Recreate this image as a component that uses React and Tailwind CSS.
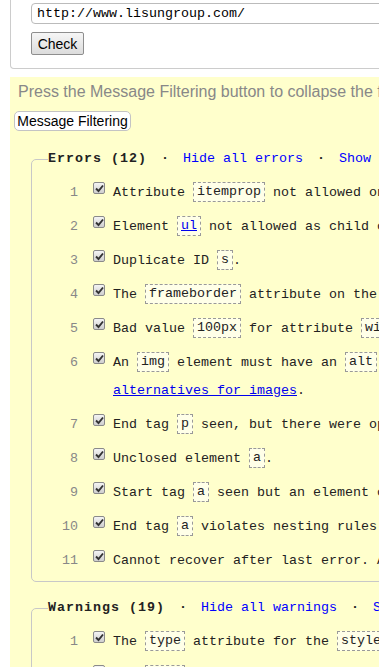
import React from "react";

const mono = { fontFamily: '"Liberation Mono", "DejaVu Sans Mono", monospace' };

function Code({ children, link }) {
  return (
    <code className="inline-block border border-dashed border-[#999] bg-[#ffffe8] px-[3px] leading-[18px] align-middle">
      {link ? <a className="text-[#0000ee] underline">{children}</a> : children}
    </code>
  );
}

function Check() {
  return (
    <span className="mt-[3px] flex h-[12px] w-[12px] shrink-0 items-center justify-center rounded-[2px] border border-[#8a8a8a] bg-gradient-to-b from-[#f4f4f4] to-[#cfcfcf]">
      <svg width="9" height="9" viewBox="0 0 9 9">
        <path d="M1 4.5 L3.5 7 L8 1.5" fill="none" stroke="#333" strokeWidth="1.9" />
      </svg>
    </span>
  );
}

function Row({ n, children }) {
  return (
    <li className="mb-[6px] flex leading-[28px]">
      <span className="w-[30px] shrink-0 text-right text-[#888]">{n}</span>
      <span className="ml-[15px] flex"><Check /></span>
      <span className="ml-[8px] whitespace-nowrap text-[#222]">{children}</span>
    </li>
  );
}

function Sep() {
  return <span className="inline-block w-[36px] text-center font-bold text-[#222]">·</span>;
}

export default function App() {
  return (
    <div className="h-[667px] w-[379px] overflow-hidden bg-white">
      <div className="ml-[10px] w-[600px] rounded-bl-[4px] border border-t-0 border-[#ccc] pb-[13px] pl-[20px] pt-[3px]">
        <div
          className="h-[21px] w-[560px] rounded-[4px] border border-[#bbb] pl-[5px] text-[13.33px] leading-[19px] text-black"
          style={mono}
        >
          http://www.lisungroup.com/
        </div>
        <button
          className="mt-[8px] h-[23px] w-[53px] rounded-[2px] border border-[#8e8e8e] bg-gradient-to-b from-[#f6f6f6] to-[#dcdcdc] text-[14px] leading-[20px] text-black"
          style={{ fontFamily: '"Liberation Sans", Arial, sans-serif' }}
        >
          Check
        </button>
      </div>

      <div className="ml-[10px] mt-[8px] w-[700px] bg-[#ffffcc] px-[4px] pb-[40px] pt-[5px]">
        <p
          className="whitespace-nowrap pl-[4px] text-[16px] leading-[20px] text-[#888]"
          style={{ fontFamily: '"Liberation Sans", Arial, sans-serif' }}
        >
          Press the Message Filtering button to collapse the filtering options and error/warning/info counts.
        </p>
        <button
          className="mt-[9px] h-[20px] w-[117px] rounded-[5px] border border-[#c4c4c4] bg-white text-[14px] leading-[18px] text-black"
          style={{ fontFamily: '"Liberation Sans", Arial, sans-serif' }}
        >
          Message Filtering
        </button>

        <div style={mono} className="text-[13.33px]">
          <fieldset className="ml-[17px] mt-[19px] rounded-[5px] border border-[#c8c8c8] pl-[16px] pt-[12px]">
            <legend className="whitespace-nowrap leading-[16px]">
              <span className="font-bold tracking-[1px] text-[#222]">Errors (12)</span>
              <Sep />
              <a className="text-[#0000ff]">Hide all errors</a>
              <Sep />
              <a className="text-[#0000ff]">Show all errors</a>
            </legend>
            <ol>
              <Row n="1">Attribute <Code>itemprop</Code> not allowed on element <Code>div</Code> at this point.</Row>
              <Row n="2">Element <Code link>ul</Code> not allowed as child of element <Code>span</Code> in this context.</Row>
              <Row n="3">Duplicate ID <Code>s</Code>.</Row>
              <Row n="4">The <Code>frameborder</Code> attribute on the <Code>iframe</Code> element is obsolete.</Row>
              <Row n="5">Bad value <Code>100px</Code> for attribute <Code>width</Code> on element <Code>img</Code>.</Row>
              <li className="mb-[6px] flex leading-[28px]">
                <span className="w-[30px] shrink-0 text-right text-[#888]">6</span>
                <span className="ml-[15px] flex"><Check /></span>
                <span className="ml-[8px] whitespace-nowrap text-[#222]">
                  An <Code>img</Code> element must have an <Code>alt</Code> attribute, except under certain conditions. For details,
                  <br />
                  <a className="text-[#0000ee] underline">alternatives for images</a>.
                </span>
              </li>
              <Row n="7">End tag <Code>p</Code> seen, but there were open elements.</Row>
              <Row n="8">Unclosed element <Code>a</Code>.</Row>
              <Row n="9">Start tag <Code>a</Code> seen but an element of the same type was already open.</Row>
              <Row n="10">End tag <Code>a</Code> violates nesting rules.</Row>
              <Row n="11">Cannot recover after last error. Any further errors will be ignored.</Row>
            </ol>
          </fieldset>

          <fieldset className="ml-[17px] mt-[18px] rounded-[5px] border border-[#c8c8c8] pl-[16px] pt-[12px]">
            <legend className="whitespace-nowrap leading-[16px]">
              <span className="font-bold tracking-[1px] text-[#222]">Warnings (19)</span>
              <Sep />
              <a className="text-[#0000ff]">Hide all warnings</a>
              <Sep />
              <a className="text-[#0000ff]">Show all warnings</a>
            </legend>
            <ol>
              <Row n="1">The <Code>type</Code> attribute for the <Code>style</Code> element is not needed and should be omitted.</Row>
              <Row n="2">The <Code>type</Code> attribute is unnecessary for JavaScript resources.</Row>
            </ol>
          </fieldset>
        </div>
      </div>
    </div>
  );
}
